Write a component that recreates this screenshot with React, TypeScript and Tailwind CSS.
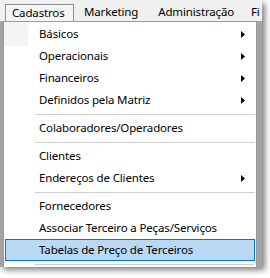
import React from "react";

type Entry =
  | { kind: "item"; label: string; sub?: boolean; active?: boolean }
  | { kind: "sep" };

const entries: Entry[] = [
  { kind: "item", label: "Básicos", sub: true },
  { kind: "item", label: "Operacionais", sub: true },
  { kind: "item", label: "Financeiros", sub: true },
  { kind: "item", label: "Definidos pela Matriz", sub: true },
  { kind: "sep" },
  { kind: "item", label: "Colaboradores/Operadores" },
  { kind: "sep" },
  { kind: "item", label: "Clientes" },
  { kind: "item", label: "Endereços de Clientes", sub: true },
  { kind: "sep" },
  { kind: "item", label: "Fornecedores" },
  { kind: "item", label: "Associar Terceiro a Peças/Serviços" },
  { kind: "item", label: "Tabelas de Preço de Terceiros", active: true },
  { kind: "sep" },
];

const font = { fontFamily: '"Noto Sans", "Open Sans", sans-serif' };

// small black submenu triangle
const Arrow = () => (
  <svg width="4" height="7" viewBox="0 0 4 7" className="block">
    <path d="M0 0 L4 3.5 L0 7 Z" fill="#000" />
  </svg>
);

export default function App() {
  return (
    <div className="w-[270px] h-[278px] bg-white overflow-hidden" style={font}>
      <div className="w-[262px] h-[267px] flex flex-col shadow-[3px_3px_6px_rgba(0,0,0,0.5)]">
        {/* Menu bar */}
        <div className="h-[22px] bg-[#f0f0f0] flex items-end pl-[5px] text-[11.5px] tracking-[-0.15px] text-black leading-none relative z-10 overflow-hidden">
          <div className="h-[18px] w-[69px] shrink-0 border border-b-0 border-[#8e8e8e] bg-[#f5f5f5] flex items-center pl-[6px] -mb-px pb-px">
            Cadastros
          </div>
          <div className="h-[18px] flex items-center pl-[10px] pb-px">Marketing</div>
          <div className="h-[18px] flex items-center pl-[20px] pb-px">Administração</div>
          <div className="h-[18px] flex items-center pl-[17px] pb-px">Fi</div>
        </div>

        {/* Area under the bar */}
        <div className="flex-1 flex bg-[#a3a3a3]">
          <div className="w-[3px]" />
          <div className="w-[254px] bg-white border border-b-0 border-[#9a9a9a] pt-[1px] text-[11.5px] tracking-[-0.15px] text-black relative">
            <div className="absolute left-0 top-0 w-[24px] h-[24px] bg-[#f4f4f4]" />
            {entries.map((e, i) =>
              e.kind === "sep" ? (
                <div key={i} className="h-[6px] flex items-center pl-[31px] pr-[1px]">
                  <div className="h-px w-full bg-[#cfcfcf]" />
                </div>
              ) : e.active ? (
                <div
                  key={i}
                  className="h-[22px] mx-[1px] border border-[#0078d7] bg-[#b9d8f4] flex items-center pl-[33px] relative"
                >
                  {e.label}
                </div>
              ) : (
                <div key={i} className="h-[22px] flex items-center justify-between pl-[35px] pr-[11px] relative">
                  <span>{e.label}</span>
                  {e.sub && <Arrow />}
                </div>
              )
            )}
          </div>
        </div>
      </div>
    </div>
  );
}
